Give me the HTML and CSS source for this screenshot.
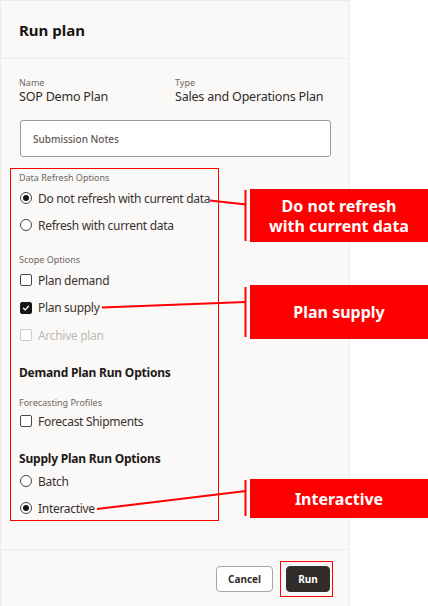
FILE: index.html
```html
<!DOCTYPE html>
<html>
<head>
<meta charset="utf-8">
<link rel="stylesheet" href="styles.css">
</head>
<body>
<div class="page">
  <div class="panel">
    <div class="header">Run plan</div>
    <div class="content">
      <div class="meta">
        <div class="field name">
          <div class="label">Name</div>
          <div class="value">SOP Demo Plan</div>
        </div>
        <div class="field">
          <div class="label">Type</div>
          <div class="value">Sales and Operations Plan</div>
        </div>
      </div>
      <div class="notes">Submission Notes</div>

      <div class="label group-label first">Data Refresh Options</div>
      <div class="options">
        <div class="opt"><span class="radio on"></span>Do not refresh with current data</div>
        <div class="opt"><span class="radio"></span>Refresh with current data</div>
      </div>

      <div class="label group-label">Scope Options</div>
      <div class="options scope">
        <div class="opt"><span class="check"></span>Plan demand</div>
        <div class="opt"><span class="check on"><svg viewBox="0 0 12 12" width="12" height="12"><path d="M3 6.2 L5.1 8.3 L9 3.9" fill="none" stroke="#fff" stroke-width="1.6" stroke-linecap="round" stroke-linejoin="round"/></svg></span>Plan supply</div>
        <div class="opt disabled"><span class="check"></span>Archive plan</div>
      </div>

      <div class="section-title">Demand Plan Run Options</div>
      <div class="label group-label small">Forecasting Profiles</div>
      <div class="options tight">
        <div class="opt"><span class="check"></span>Forecast Shipments</div>
      </div>

      <div class="section-title">Supply Plan Run Options</div>
      <div class="options tight">
        <div class="opt"><span class="radio"></span>Batch</div>
        <div class="opt"><span class="radio on"></span>Interactive</div>
      </div>
    </div>
    <div class="footer">
      <button class="btn cancel">Cancel</button>
      <button class="btn run">Run</button>
    </div>
  </div>

  <div class="hl hl-options"></div>
  <div class="hl hl-run"></div>

  <svg class="leaders" width="428" height="606" viewBox="0 0 428 606">
    <g stroke="#ff0000" stroke-width="2" fill="none">
      <line x1="210" y1="200.5" x2="246" y2="204.5"/>
      <line x1="245.5" y1="190" x2="245.5" y2="241"/>
      <line x1="102" y1="307.5" x2="246" y2="302"/>
      <line x1="245.5" y1="287" x2="245.5" y2="337"/>
      <line x1="97" y1="509" x2="246" y2="491"/>
      <line x1="245.5" y1="480" x2="245.5" y2="516"/>
    </g>
  </svg>

  <div class="callout c1">Do not refresh<br>with current data</div>
  <div class="callout c2">Plan supply</div>
  <div class="callout c3">Interactive</div>
</div>
</body>
</html>
```

FILE: styles.css
```css
* { box-sizing: border-box; }
html, body { margin: 0; padding: 0; background: #ffffff; }
body {
  font-family: "Noto Sans", "Open Sans", sans-serif;
  color: #2b2624;
}
.page {
  position: relative;
  width: 428px;
  height: 606px;
  overflow: hidden;
}
.panel {
  width: 350px;
  height: 606px;
  background: #faf9f7;
  border: 1px solid #ecebe8;
  border-bottom: none;
  display: flex;
  flex-direction: column;
}
.header {
  height: 58px;
  flex: none;
  display: flex;
  align-items: center;
  padding-left: 18px;
  font-size: 15px;
  font-weight: 700;
  color: #161513;
  border-bottom: 1px solid #eeebe8;
}
.content {
  padding: 18px 19px 0 18px;
  height: 491px;
  flex: none;
  border-bottom: 1px solid #eeebe8;
}
.meta { display: flex; }
.field.name { width: 156px; }
.label {
  font-size: 9px;
  line-height: 12px;
  color: #6c6662;
}
.value {
  font-size: 12.5px;
  line-height: 16px;
  color: #2f2a28;
  letter-spacing: -0.2px;
}
.notes {
  margin-top: 15px;
  margin-left: 1px;
  width: 311px;
  height: 37px;
  background: #ffffff;
  border: 1px solid #9c9a98;
  border-radius: 3px;
  display: flex;
  align-items: center;
  padding-left: 12px;
  font-size: 10px;
  font-weight: 500;
  color: #625955;
}
.group-label { margin-top: 19px; }
.group-label.first { margin-top: 15px; }
.group-label.small { margin-top: 16px; }
.options {
  margin-top: 4px;
  display: flex;
  flex-direction: column;
  gap: 7px;
}
.options.scope { gap: 7.5px; }
.options.tight { margin-top: 2px; }
.opt {
  height: 20px;
  display: flex;
  align-items: center;
  font-size: 12px;
  color: #39322f;
  letter-spacing: -0.3px;
}
.opt.disabled { color: #bdb9b6; }
.radio {
  width: 12px;
  height: 12px;
  border: 1.4px solid #4a4442;
  border-radius: 50%;
  margin: 0 6px 0 1px;
  display: inline-flex;
  align-items: center;
  justify-content: center;
  flex: none;
  background: #fff;
}
.radio.on::after {
  content: "";
  width: 6px;
  height: 6px;
  border-radius: 50%;
  background: #161513;
}
.check {
  width: 12px;
  height: 12px;
  border: 1.4px solid #4d4745;
  border-radius: 2px;
  margin: 0 6px 0 1px;
  flex: none;
  display: inline-flex;
  align-items: center;
  justify-content: center;
  background: #fff;
}
.check svg { display: block; }
.check.on { background: #161513; border-color: #161513; }
.opt.disabled .check { border-color: #cfcbc8; }
.section-title {
  margin-top: 20px;
  font-size: 12px;
  line-height: 16px;
  font-weight: 700;
  color: #1e1a18;
  letter-spacing: -0.2px;
}
.options + .section-title { margin-top: 20px; }
.section-title + .options { margin-top: 4px; }
.footer {
  flex: 1;
  display: flex;
  justify-content: flex-end;
  align-items: flex-start;
  gap: 13px;
  padding: 16px 19px 0 0;
}
.btn {
  height: 26px;
  border-radius: 4px;
  font-family: "Noto Sans", sans-serif;
  font-size: 10px;
  font-weight: 700;
  padding: 0;
  cursor: pointer;
}
.cancel {
  width: 57px;
  background: #ffffff;
  border: 1px solid #a8a6a4;
  color: #312d2a;
}
.run {
  width: 44px;
  background: #312d2a;
  border: 1px solid #312d2a;
  color: #ffffff;
}
.hl {
  position: absolute;
  border: 1.5px solid #ff0000;
}
.hl-options { left: 10px; top: 168px; width: 209px; height: 353px; }
.hl-run { left: 280px; top: 561px; width: 53px; height: 36px; }
.leaders { position: absolute; left: 0; top: 0; }
.callout {
  position: absolute;
  left: 250px;
  width: 178px;
  background: #ff0000;
  color: #ffffff;
  font-weight: 700;
  font-size: 16px;
  line-height: 20px;
  text-align: center;
  display: flex;
  align-items: center;
  justify-content: center;
  font-family: "Noto Sans", sans-serif;
}
.c1 { top: 189px; height: 53px; }
.c2 { top: 285px; height: 54px; }
.c3 { top: 479px; height: 39px; }
```
